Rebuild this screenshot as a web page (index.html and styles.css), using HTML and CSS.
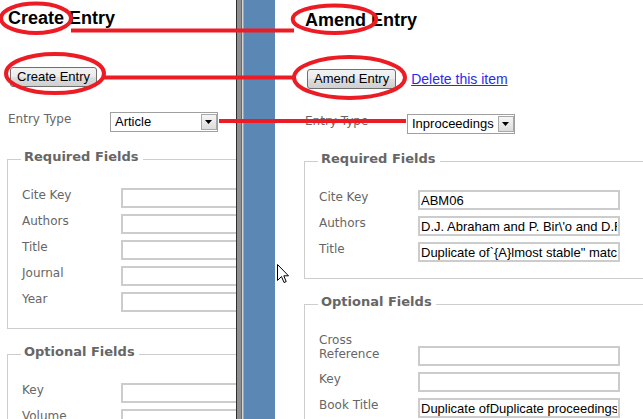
FILE: index.html
```html
<!DOCTYPE html>
<html>
<head>
<meta charset="utf-8">
<title>Create / Amend Entry</title>
<link rel="stylesheet" href="styles.css">
</head>
<body>
<div class="screen">
  <section class="pane pane-create">
    <h1 class="title">Create Entry</h1>
    <div class="actions">
      <button class="btn" type="button">Create Entry</button>
    </div>
    <div class="type-row">
      <span class="type-label">Entry Type</span>
      <div class="select">
        <span class="select-value">Article</span>
        <span class="select-arrow"><svg width="8" height="5" viewBox="0 0 8 5"><path d="M0 0H7L3.5 4Z" fill="#000"/></svg></span>
      </div>
    </div>
    <fieldset class="group">
      <legend>Required Fields</legend>
      <div class="field"><label>Cite Key</label><input type="text" value=""></div>
      <div class="field"><label>Authors</label><input type="text" value=""></div>
      <div class="field"><label>Title</label><input type="text" value=""></div>
      <div class="field"><label>Journal</label><input type="text" value=""></div>
      <div class="field"><label>Year</label><input type="text" value=""></div>
    </fieldset>
    <fieldset class="group group-optional">
      <legend>Optional Fields</legend>
      <div class="field"><label>Key</label><input type="text" value=""></div>
      <div class="field"><label>Volume</label><input type="text" value=""></div>
    </fieldset>
  </section>

  <div class="splitter"></div>
  <div class="sidebar"></div>

  <section class="pane pane-amend">
    <h1 class="title">Amend Entry</h1>
    <div class="actions">
      <button class="btn" type="button">Amend Entry</button>
      <a class="delete-link" href="#">Delete this item</a>
    </div>
    <div class="type-row">
      <span class="type-label">Entry Type</span>
      <div class="select">
        <span class="select-value">Inproceedings</span>
        <span class="select-arrow"><svg width="8" height="5" viewBox="0 0 8 5"><path d="M0 0H7L3.5 4Z" fill="#000"/></svg></span>
      </div>
    </div>
    <fieldset class="group">
      <legend>Required Fields</legend>
      <div class="field"><label>Cite Key</label><input type="text" value="ABM06"></div>
      <div class="field"><label>Authors</label><input type="text" value="D.J. Abraham and P. Bir\'o and D.F. Manlove"></div>
      <div class="field"><label>Title</label><input type="text" value="Duplicate of`{A}lmost stable&quot; matchings in the Roommates problem"></div>
    </fieldset>
    <fieldset class="group group-optional">
      <legend>Optional Fields</legend>
      <div class="field field-tall"><label>Cross Reference</label><input type="text" value=""></div>
      <div class="field"><label>Key</label><input type="text" value=""></div>
      <div class="field"><label>Book Title</label><input type="text" value="Duplicate ofDuplicate proceedings"></div>
    </fieldset>
  </section>

  <svg class="annotations" width="643" height="419" viewBox="0 0 643 419">
    <g fill="none" stroke="#ed1c24" stroke-width="4">
      <ellipse cx="36" cy="18.3" rx="35" ry="14.7"/>
      <ellipse cx="334.5" cy="19.2" rx="41.8" ry="13.8"/>
      <ellipse cx="55" cy="73.5" rx="49" ry="19.5"/>
      <ellipse cx="349.5" cy="77.5" rx="55.5" ry="20.5"/>
      <line x1="71" y1="30.5" x2="294" y2="30.5"/>
      <line x1="104" y1="77.5" x2="294" y2="77.5"/>
      <line x1="219" y1="121" x2="406" y2="121"/>
    </g>
  </svg>

  <svg class="cursor" width="13" height="20" viewBox="0 0 13 20">
    <path d="M0.5 0.5V16.5L4.5 12.5L7 18.5L9.2 17.6L6.8 11.8H11.5Z" fill="#fff" stroke="#000" stroke-width="1" stroke-linejoin="miter"/>
  </svg>
</div>
</body>
</html>
```

FILE: styles.css
```css
* {
  box-sizing: border-box;
}

html, body {
  margin: 0;
  padding: 0;
  background: #fff;
}

.screen {
  position: relative;
  display: flex;
  width: 643px;
  height: 419px;
  overflow: hidden;
  font-family: "Liberation Sans", Arial, sans-serif;
}

.pane {
  flex: none;
  overflow: hidden;
  height: 419px;
}

.pane-create {
  width: 236px;
}

.pane-amend {
  flex: 1 1 auto;
  padding: 2px 0 0 22px;
}

.splitter {
  flex: none;
  width: 8px;
  background: linear-gradient(to right,
    #2f2f2f 0, #2f2f2f 1px,
    #8e8e8e 1px, #8e8e8e 5px,
    #6a6a6a 5px, #6a6a6a 6px,
    #d4d4d4 6px, #d4d4d4 7px,
    #8fa9c6 7px, #8fa9c6 8px);
}

.sidebar {
  flex: none;
  width: 31px;
  background: #5b87b5;
}

.title {
  margin: 7px 0 0 8px;
  font-size: 18px;
  line-height: 22px;
  font-weight: bold;
  color: #000;
  white-space: nowrap;
}

.actions {
  display: flex;
  align-items: center;
  margin: 38px 0 0 10px;
  white-space: nowrap;
}

.btn {
  height: 20px;
  margin: 0;
  padding: 0 6px 0 6px;
  border: 1px solid #707070;
  border-radius: 3px;
  background: linear-gradient(#f3f3f3 0%, #ebebeb 48%, #dedede 52%, #cfcfcf 100%);
  font-family: "Liberation Sans", Arial, sans-serif;
  font-size: 13px;
  line-height: 16px;
  color: #000;
}

.delete-link {
  margin-left: 15px;
  font-family: "Liberation Sans", Arial, sans-serif;
  font-size: 14px;
  color: #2a2aee;
  text-decoration: underline;
}

.type-row {
  display: flex;
  align-items: flex-start;
  margin: 25px 0 0 8px;
}

.type-label {
  width: 102px;
  font-family: "DejaVu Sans", Verdana, sans-serif;
  font-size: 12px;
  line-height: 14px;
  color: #666;
}

.select {
  display: flex;
  width: 108px;
  height: 20px;
  border: 1px solid #a0a0a0;
  background: #fff;
}

.select-value {
  flex: 1;
  padding-left: 4px;
  font-size: 13px;
  line-height: 18px;
  color: #000;
  white-space: nowrap;
  overflow: hidden;
}

.select-arrow {
  display: flex;
  align-items: center;
  justify-content: center;
  width: 16px;
  height: 16px;
  margin: 1px 0 0 0;
  border: 1px solid #a8a8a8;
  background: linear-gradient(#f6f6f6, #dcdcdc);
}

.group {
  width: 400px;
  margin: 17px 0 0 7px;
  padding: 19px 0 16px 13px;
  border: 1px solid #cdcdcd;
  min-width: 0;
}

.group-optional {
  margin-top: 15px;
}

.group legend {
  padding: 0 4px 5px 3px;
  font-family: "DejaVu Sans", Verdana, sans-serif;
  font-size: 13px;
  line-height: 15px;
  font-weight: bold;
  color: #666;
}

.field {
  display: flex;
  align-items: flex-start;
  margin-bottom: 6px;
}

.field:last-child {
  margin-bottom: 0;
}

.field label {
  flex: none;
  width: 100px;
  padding: 0 8px 0 1px;
  font-family: "DejaVu Sans", Verdana, sans-serif;
  font-size: 12px;
  line-height: 14px;
  color: #666;
}

.field input {
  flex: none;
  width: 202px;
  height: 20px;
  margin: 0;
  padding: 0 1px;
  border: 2px solid #cccccc;
  font-family: "Liberation Sans", Arial, sans-serif;
  font-size: 13px;
  color: #000;
  background: #fff;
  outline: none;
}

.field-tall input {
  margin-top: 13px;
}

.annotations {
  position: absolute;
  left: 0;
  top: 0;
  pointer-events: none;
}

.cursor {
  position: absolute;
  left: 277px;
  top: 264px;
  pointer-events: none;
}
```
